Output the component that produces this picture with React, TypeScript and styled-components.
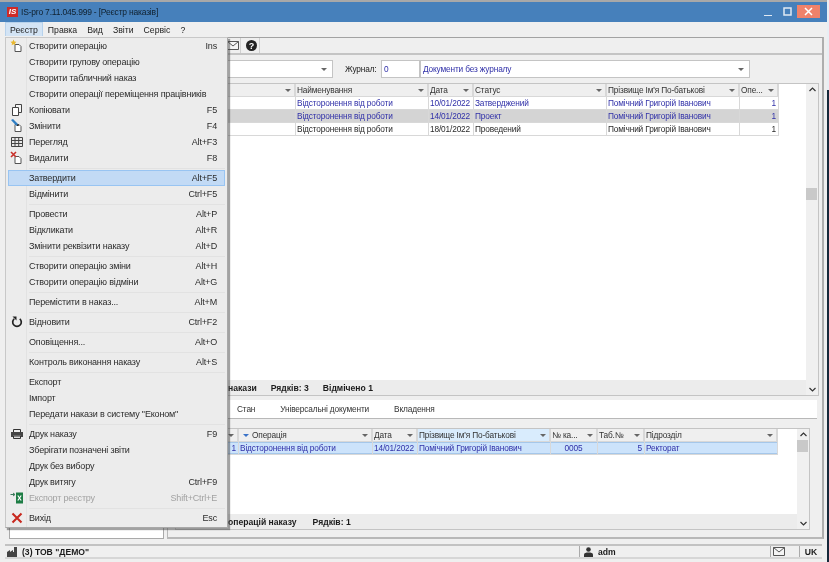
import React from "react";
import styled, {createGlobalStyle} from "styled-components";

const Global = createGlobalStyle`
  html, body {
    margin: 0;
    padding: 0;
    background: #1c2c3c;
    overflow: hidden;
  }
  * { box-sizing: border-box; }
`

const Page = styled.div`
  width: 829px;
  height: 562px;
  position: relative;
  overflow: hidden;
  font-family: "Liberation Sans", sans-serif;
  font-size: 8.3px;
  letter-spacing: -.15px;
  color: #222;
  background: linear-gradient(#e8eef4 0, #e8eef4 90px, #16283a 90px, #16283a 100%);
  filter: blur(.3px);
`

const Window = styled.div`
  width: 827px;
  height: 562px;
  display: flex;
  flex-direction: column;
  background: #efefef;
  border-top: 2px solid #a8a8a8;
`

const TitleBar = styled.div`
  height: 20px;
  flex: none;
  display: flex;
  align-items: center;
  background: #4680bb;
  padding: 0 0 1px 7px;
`

const Logo = styled.span`
  width: 11px;
  height: 10px;
  background: #cf2a27;
  color: #fff;
  font: italic bold 8px "Liberation Sans", sans-serif;
  letter-spacing: 0;
  display: flex;
  align-items: center;
  justify-content: center;
  margin-right: 3px;
`

const TitleText = styled.span`
  font-size: 8.5px;
  letter-spacing: -.2px;
  color: #10202e;
  flex: 1;
`

const WinButton = styled.span<{ $close?: boolean }>`
  width: ${p => p.$close ? 23 : 19}px;
  height: 13px;
  margin-right: ${p => p.$close ? 7 : 0}px;
  background: ${p => p.$close ? "#f0826a" : "transparent"};
  display: flex;
  align-items: center;
  justify-content: center;
`

const MenuBar = styled.div`
  height: 15px;
  flex: none;
  display: flex;
  padding-left: 5px;
  background: #efefef;
`

const MenuTitle = styled.span<{ $active?: boolean }>`
  height: 14px;
  padding: 0 4px;
  display: flex;
  align-items: center;
  font-size: 8.7px;
  letter-spacing: 0;
  background: ${p => p.$active ? "#d3e4f5" : "transparent"};
  border: 1px solid ${p => p.$active ? "#b7d2ec" : "transparent"};
  border-bottom: 0;
`

const Workspace = styled.div`
  flex: 1;
  min-height: 0;
  display: flex;
  gap: 3px;
  padding: 0 3px 4px 9px;
`

const LeftPane = styled.div`
  width: 155px;
  flex: none;
  background: #fff;
  border: 1px solid #a9a9a9;
`

const RightPane = styled.div`
  flex: 1;
  min-width: 0;
  display: flex;
  flex-direction: column;
  border-style: solid;
  border-width: 1px 2px 2px 1px;
  border-color: #a2a2a2 #aeaeae #b8b8b8 #b8b8b8;
`

const Toolbar = styled.div`
  height: 17px;
  flex: none;
  display: flex;
  align-items: center;
  padding-left: 57px;
  gap: 3px;
  border-bottom: 2px solid #c4c4c4;
`

const ToolButton = styled.span`
  width: 16px;
  height: 15px;
  display: flex;
  align-items: center;
  justify-content: center;
  border-right: 1px solid #d0d0d0;
`

const HelpDot = styled.span`
  width: 11px;
  height: 11px;
  border-radius: 50%;
  background: #222;
  color: #fff;
  font: bold 9px "Liberation Sans", sans-serif;
  display: flex;
  align-items: center;
  justify-content: center;
`

const FilterRow = styled.div`
  height: 18px;
  flex: none;
  margin: 5px 0 5px 7px;
  display: flex;
  align-items: center;
`

const Combo = styled.div<{ $width: number }>`
  width: ${p => p.$width}px;
  height: 18px;
  background: #fff;
  border: 1px solid #c4c4c4;
  display: flex;
  align-items: center;
  justify-content: flex-end;
  padding-right: 5px;
  flex: none;
`

const ComboText = styled.span`
  flex: 1;
  color: #3030a8;
  padding-left: 2px;
`

const FilterLabel = styled.span`
  width: 48px;
  flex: none;
  padding-left: 12px;
  white-space: nowrap;
`

const Arrow = styled.i<{ $color?: string }>`
  width: 0;
  height: 0;
  flex: none;
  border-left: 3px solid transparent;
  border-right: 3px solid transparent;
  border-top: 3px solid ${p => p.$color || "#666"};
`

const GridFrame = styled.div<{ $height: number, $right: number, $top: number }>`
  height: ${p => p.$height}px;
  flex: none;
  margin: ${p => p.$top}px ${p => p.$right}px 0 7px;
  display: flex;
  border: 1px solid #c4c4c4;
  background: #fff;
`

const GridBody = styled.div`
  flex: 1;
  min-width: 0;
  display: flex;
  flex-direction: column;
`

const GridRows = styled.div`
  flex: 1;
  min-height: 0;
`

const Row = styled.div<{ $columns: string, $tone?: string, $ink?: string }>`
  height: 13px;
  display: grid;
  grid-template-columns: ${p => p.$columns};
  color: ${p => p.$ink || "#3030a8"};
  background: ${p => p.$tone === "gray" ? "#d4d4d4" : p.$tone === "sel" ? "#cce3fb" : "#fff"};
  box-shadow: ${p => p.$tone === "sel" ? "inset 0 1px #a5c7ea, inset 0 -2px #a5c7ea" : "none"};
  width: fit-content;
`

const Cell = styled.span<{ $align?: string }>`
  padding: 0 2px 0 1px;
  line-height: 13px;
  white-space: nowrap;
  overflow: hidden;
  text-align: ${p => p.$align || "left"};
  border-right: 1px solid #d8d8d8;
  border-bottom: 1px solid #d8d8d8;
`

const HeaderRow = styled.div<{ $columns: string }>`
  height: 13px;
  display: grid;
  grid-template-columns: ${p => p.$columns};
  width: fit-content;
  color: #333;
`

const HeaderCell = styled.span<{ $lit?: boolean }>`
  display: flex;
  align-items: center;
  justify-content: space-between;
  padding: 0 3px 0 1px;
  background: ${p => p.$lit ? "#d9ecfd" : "#efefef"};
  border-right: 2px solid #d8d8d8;
  border-bottom: 1px solid #d8d8d8;
  white-space: nowrap;
  overflow: hidden;
`

const HeaderLabel = styled.span`
  display: flex;
  align-items: center;
  gap: 3px;
  padding-left: 3px;
`

const GridStatus = styled.div<{ $gap: number }>`
  height: 15px;
  flex: none;
  display: flex;
  align-items: center;
  gap: ${p => p.$gap}px;
  padding-left: 52px;
  background: #ececec;
  font-weight: 700;
  font-size: 8.6px;
  letter-spacing: 0;
  color: #1c1c1c;
  white-space: nowrap;
`

const Scrollbar = styled.div<{ $thumbTop: number }>`
  width: 12px;
  flex: none;
  background: #f0f0f0;
  position: relative;
  display: flex;
  flex-direction: column;
  align-items: center;
  justify-content: space-between;
  padding: 3px 0;
  &::after {
    content: "";
    position: absolute;
    left: 0;
    width: 11px;
    height: 12px;
    top: ${p => p.$thumbTop}px;
    background: #c9c9c9;
  }
`

const TabStrip = styled.div`
  height: 19px;
  flex: none;
  margin: 4px 5px 0 7px;
  padding-left: 61px;
  background: #fff;
  border-bottom: 1px solid #b8b8b8;
  border-left: 1px solid #b8b8b8;
  display: flex;
  align-items: center;
  gap: 25px;
`

const Tab = styled.span`
  color: #333;
`

const StatusBar = styled.div`
  height: 15px;
  flex: none;
  display: flex;
  align-items: center;
  margin: 1px 5px 3px 5px;
  border-top: 2px solid #c2c2c2;
  border-bottom: 2px solid #d6d6d6;
`

const StatusCell = styled.div<{ $width?: number, $end?: boolean }>`
  width: ${p => p.$width ? p.$width + "px" : "auto"};
  flex: ${p => p.$width ? "none" : 1};
  height: 100%;
  display: flex;
  align-items: center;
  justify-content: ${p => p.$end ? "center" : "flex-start"};
  gap: 4px;
  padding-left: ${p => p.$end ? 0 : 2}px;
  border-left: ${p => p.$width ? "1px solid #aaa" : 0};
  font-weight: 700;
  font-size: 8.6px;
  letter-spacing: 0;
  color: #1c1c1c;
`

const Menu = styled.div`
  position: absolute;
  left: 5px;
  top: 37px;
  width: 223px;
  height: 491px;
  padding: 0 2px;
  font-size: 9px;
  letter-spacing: -.17px;
  background: linear-gradient(90deg, #ececec 0, #ececec 20px, #e2e2e2 20px, #e2e2e2 21px, #ececec 21px);
  border: 1px solid #c8c8c8;
  border-right-color: #a8a8a8;
  border-bottom-color: #a8a8a8;
  box-shadow: 2px 2px 1px rgba(70, 70, 70, .5);
`

const MenuItem = styled.div<{ $hot?: boolean, $off?: boolean }>`
  height: 16px;
  display: flex;
  align-items: center;
  color: ${p => p.$off ? "#a2a2a2" : "#2c2c2c"};
  background: ${p => p.$hot ? "#c2daf5" : "transparent"};
  box-shadow: ${p => p.$hot ? "inset 0 0 0 1px #98c4f2" : "none"};
`

const MenuIcon = styled.span`
  width: 18px;
  height: 16px;
  flex: none;
  display: flex;
  align-items: center;
  justify-content: center;
  margin-right: 3px;
`

const MenuLabel = styled.span`
  flex: 1;
  white-space: nowrap;
`

const MenuKey = styled.span`
  padding-right: 8px;
  white-space: nowrap;
`

const MenuGap = styled.div`
  height: 4px;
  margin-left: 21px;
  position: relative;
  &::after {
    content: "";
    position: absolute;
    left: 0;
    right: 0;
    top: 2px;
    height: 1px;
    background: #e2e2e2;
  }
`

const Doc = () => <path d="M5 5.5h4l2 2v5H5z" fill="#fff" stroke="#555" strokeWidth="1"/>

const icons: Record<string, React.ReactNode> = {
  create: <>
    <Doc/>
    <path d="M3.5 0.5l.9 2 2.1.3-1.5 1.4.4 2.1-1.9-1-1.9 1 .4-2.1L.5 2.8l2.100-.3z" fill="#e8b830"/>
  </>,
  copy: <>
    <path d="M5.5 1.500h6v8h-6z" fill="#f4f4f4" stroke="#444"/>
    <path d="M2.500 4.500h6v8h-6z" fill="#fff" stroke="#444"/>
  </>,
  edit: <>
    <Doc/>
    <path d="M1 1l2-1 5 5-1.500 2z" fill="#2f7fc4"/>
    <path d="M6.500 7l1.500-2 1 2z" fill="#222"/>
  </>,
  table: <>
    <path d="M1.500 2.500h11v9h-11z" fill="#e8e8e8" stroke="#444"/>
    <path d="M1.500 5.500h11M1.500 8.500h11M5 2.500v9M8.700 2.500v9" stroke="#444" fill="none"/>
  </>,
  remove: <>
    <Doc/>
    <path d="M1 1l5 5M6 1L1 6" stroke="#c8302a" strokeWidth="1.600" fill="none"/>
  </>,
  restore: <>
    <path d="M4.200 3.800a4.300 4.300 0 1 0 5.600 0" fill="none" stroke="#222" strokeWidth="1.700"/>
    <path d="M2.500 1.500h4v4z" fill="#222"/>
  </>,
  print: <>
    <path d="M3.500 2.500h7v3h-7z" fill="#eee" stroke="#333"/>
    <path d="M1 5h12v5h-2.500v-1.500h-7V10H1z" fill="#444"/>
    <path d="M3.500 9h7v2.500h-7z" fill="#ddd" stroke="#333"/>
  </>,
  excel: <>
    <path d="M6 1.500h7v11H6z" fill="#1e7d45"/>
    <path d="M7.800 4.500l3.400 5M11.200 4.500l-3.400 5" stroke="#fff" strokeWidth="1.200"/>
    <path d="M0.500 3.500h4M3 2l2 1.500L3 5" stroke="#3a7a5a" fill="none"/>
  </>,
  exit: <path d="M2.500 2.500l9 9M11.500 2.500l-9 9" stroke="#c8281e" strokeWidth="2.100" fill="none"/>,
}

const Icon = ({name}: { name: string }) =>
  <svg width="14" height="14" viewBox="0 0 14 14">{icons[name]}</svg>

const Envelope = () => <svg width="12" height="9" viewBox="0 0 12 9">
  <path d="M.5.500h11v8H.500z" fill="#f4f4f4" stroke="#555"/>
  <path d="M.5.500L6 5l5.500-4.500" fill="none" stroke="#555"/>
</svg>

type Entry = { label: string, keys?: string, icon?: string, hot?: boolean, off?: boolean } | null

const menu: Entry[] = [
  {label: "Створити операцію", keys: "Ins", icon: "create"},
  {label: "Створити групову операцію"},
  {label: "Створити табличний наказ"},
  {label: "Створити операції переміщення працівників"},
  {label: "Копіювати", keys: "F5", icon: "copy"},
  {label: "Змінити", keys: "F4", icon: "edit"},
  {label: "Перегляд", keys: "Alt+F3", icon: "table"},
  {label: "Видалити", keys: "F8", icon: "remove"},
  null,
  {label: "Затвердити", keys: "Alt+F5", hot: true},
  {label: "Відмінити", keys: "Ctrl+F5"},
  null,
  {label: "Провести", keys: "Alt+P"},
  {label: "Відкликати", keys: "Alt+R"},
  {label: "Змінити реквізити наказу", keys: "Alt+D"},
  null,
  {label: "Створити операцію зміни", keys: "Alt+H"},
  {label: "Створити операцію відміни", keys: "Alt+G"},
  null,
  {label: "Перемістити в наказ...", keys: "Alt+M"},
  null,
  {label: "Відновити", keys: "Ctrl+F2", icon: "restore"},
  null,
  {label: "Оповіщення...", keys: "Alt+O"},
  null,
  {label: "Контроль виконання наказу", keys: "Alt+S"},
  null,
  {label: "Експорт"},
  {label: "Імпорт"},
  {label: "Передати накази в систему \"Економ\""},
  null,
  {label: "Друк наказу", keys: "F9", icon: "print"},
  {label: "Зберігати позначені звіти"},
  {label: "Друк без вибору"},
  {label: "Друк витягу", keys: "Ctrl+F9"},
  {label: "Експорт реєстру", keys: "Shift+Ctrl+E", icon: "excel", off: true},
  null,
  {label: "Вихід", keys: "Esc", icon: "exit"},
]

const upperColumns = "120px 133px 45px 133px 133px 39px"
const lowerColumns = "63px 134px 45px 133px 47px 47px 133px"

const upperRows = [
  {date: "10/01/2022", status: "Затверджений", tone: "plain"},
  {date: "14/01/2022", status: "Проект", tone: "gray"},
  {date: "18/01/2022", status: "Проведений", tone: "plain", ink: "#2a2a2a"},
]

const Chevron = ({down}: { down?: boolean }) => <svg width="7" height="5" viewBox="0 0 7 5">
  <path d={down ? "M.5 1l3 3 3-3" : "M.5 4l3-3 3 3"} fill="none" stroke="#333" strokeWidth="1.200"/>
</svg>

export default function App() {
  return <Page>
    <Global/>
    <Window>
      <TitleBar>
        <Logo>IS</Logo>
        <TitleText>IS-pro 7.11.045.999 - [Реєстр наказів]</TitleText>
        <WinButton>
          <svg width="9" height="9" viewBox="0 0 9 9"><path d="M0 8h8v1.500H0z" fill="#dfe9f3"/></svg>
        </WinButton>
        <WinButton>
          <svg width="9" height="9" viewBox="0 0 9 9"><path d="M1 1h7v7H1z" fill="none" stroke="#dfe9f3" strokeWidth="1.500"/></svg>
        </WinButton>
        <WinButton $close>
          <svg width="9" height="9" viewBox="0 0 9 9"><path d="M1 1l7 7M8 1L1 8" stroke="#fff" strokeWidth="1.500"/></svg>
        </WinButton>
      </TitleBar>
      <MenuBar>
        <MenuTitle $active>Реєстр</MenuTitle>
        <MenuTitle>Правка</MenuTitle>
        <MenuTitle>Вид</MenuTitle>
        <MenuTitle>Звіти</MenuTitle>
        <MenuTitle>Сервіс</MenuTitle>
        <MenuTitle>?</MenuTitle>
      </MenuBar>
      <Workspace>
        <LeftPane/>
        <RightPane>
          <Toolbar>
            <ToolButton><Envelope/></ToolButton>
            <ToolButton><HelpDot>?</HelpDot></ToolButton>
          </Toolbar>
          <FilterRow>
            <Combo $width={158}><Arrow/></Combo>
            <FilterLabel>Журнал:</FilterLabel>
            <Combo $width={39}><ComboText>0</ComboText></Combo>
            <Combo $width={330}><ComboText>Документи без журналу</ComboText><Arrow/></Combo>
          </FilterRow>
          <GridFrame $height={313} $right={3} $top={0}>
            <GridBody>
              <HeaderRow $columns={upperColumns}>
                <HeaderCell><span/><Arrow/></HeaderCell>
                <HeaderCell>Найменування<Arrow/></HeaderCell>
                <HeaderCell>Дата<Arrow/></HeaderCell>
                <HeaderCell>Статус<Arrow/></HeaderCell>
                <HeaderCell>Прізвище Ім'я По-батькові<Arrow/></HeaderCell>
                <HeaderCell>Опе...<Arrow/></HeaderCell>
              </HeaderRow>
              <GridRows>
                {upperRows.map(row => <Row key={row.date} $columns={upperColumns} $tone={row.tone} $ink={row.ink}>
                  <Cell/>
                  <Cell>Відсторонення від роботи</Cell>
                  <Cell>{row.date}</Cell>
                  <Cell>{row.status}</Cell>
                  <Cell>Помічний Григорій Іванович</Cell>
                  <Cell $align="right">1</Cell>
                </Row>)}
              </GridRows>
              <GridStatus $gap={14}>
                <span>накази</span>
                <span>Рядків: 3</span>
                <span>Відмічено 1</span>
              </GridStatus>
            </GridBody>
            <Scrollbar $thumbTop={104}><Chevron/><Chevron down/></Scrollbar>
          </GridFrame>
          <TabStrip>
            <Tab>Стан</Tab>
            <Tab>Універсальні документи</Tab>
            <Tab>Вкладення</Tab>
          </TabStrip>
          <GridFrame $height={102} $right={12} $top={9}>
            <GridBody>
              <HeaderRow $columns={lowerColumns}>
                <HeaderCell><span/><Arrow/></HeaderCell>
                <HeaderCell><HeaderLabel><Arrow $color="#3a72c8"/>Операція</HeaderLabel><Arrow/></HeaderCell>
                <HeaderCell>Дата<Arrow/></HeaderCell>
                <HeaderCell $lit>Прізвище Ім'я По-батькові<Arrow/></HeaderCell>
                <HeaderCell>№ ка...<Arrow/></HeaderCell>
                <HeaderCell>Таб.№<Arrow/></HeaderCell>
                <HeaderCell>Підрозділ<Arrow/></HeaderCell>
              </HeaderRow>
              <GridRows>
                <Row $columns={lowerColumns} $tone="sel">
                  <Cell $align="right">1</Cell>
                  <Cell>Відсторонення від роботи</Cell>
                  <Cell>14/01/2022</Cell>
                  <Cell>Помічний Григорій Іванович</Cell>
                  <Cell $align="center">0005</Cell>
                  <Cell $align="right">5</Cell>
                  <Cell>Ректорат</Cell>
                </Row>
              </GridRows>
              <GridStatus $gap={16}>
                <span>операцій наказу</span>
                <span>Рядків: 1</span>
              </GridStatus>
            </GridBody>
            <Scrollbar $thumbTop={11}><Chevron/><Chevron down/></Scrollbar>
          </GridFrame>
        </RightPane>
      </Workspace>
      <StatusBar>
        <StatusCell>
          <svg width="11" height="10" viewBox="0 0 11 10">
            <path d="M0 10V5l3-2v2l3-2v2h1V0h3v10z" fill="#444"/>
          </svg>
          (3) ТОВ "ДЕМО"
        </StatusCell>
        <StatusCell $width={191}>
          <svg width="11" height="10" style={{marginLeft: 1}} viewBox="0 0 11 10">
            <circle cx="5.500" cy="2.500" r="2.300" fill="#333"/>
            <path d="M1 10V7.500C1 6 3 5.500 5.500 5.500S10 6 10 7.500V10z" fill="#333"/>
          </svg>
          adm
        </StatusCell>
        <StatusCell $width={29}><Envelope/></StatusCell>
        <StatusCell $width={23} $end>UK</StatusCell>
      </StatusBar>
    </Window>
    <Menu>
      {menu.map((item, index) => item === null
        ? <MenuGap key={index}/>
        : <MenuItem key={item.label} $hot={item.hot} $off={item.off}>
          <MenuIcon>{item.icon && <Icon name={item.icon}/>}</MenuIcon>
          <MenuLabel>{item.label}</MenuLabel>
          {item.keys && <MenuKey>{item.keys}</MenuKey>}
        </MenuItem>)}
    </Menu>
  </Page>
}
